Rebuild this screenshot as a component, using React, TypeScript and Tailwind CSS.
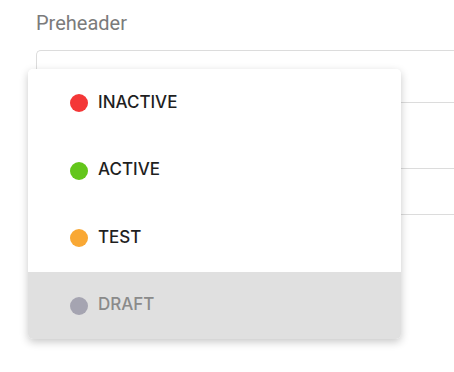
import React from "react";

const items = [
  { label: "INACTIVE", dot: "bg-[#f43737]", text: "text-[#1f1f1f]", row: "bg-white" },
  { label: "ACTIVE", dot: "bg-[#63c61b]", text: "text-[#1f1f1f]", row: "bg-white" },
  { label: "TEST", dot: "bg-[#f9a834]", text: "text-[#1f1f1f]", row: "bg-white" },
  { label: "DRAFT", dot: "bg-[#a5a4b1]", text: "text-[#8a8a8a]", row: "bg-[#e0e0e0]" },
];

export default function App() {
  return (
    <div className="relative w-[454px] h-[372px] bg-white overflow-hidden font-['Roboto',sans-serif]">
      <div className="pl-[36px] pt-[10px]">
        <div className="text-[20px] leading-[26px] text-[#7b7b7b]">Preheader</div>
        <div className="mt-[14px] h-[53px] border border-r-0 border-[#dcdcdc] rounded-tl-[5px]" />
        <div className="mt-[65px] h-[47px] border-y border-[#dcdcdc]" />
      </div>
      <div className="absolute left-[28px] top-[69px] w-[373px] rounded-[5px] bg-white overflow-hidden shadow-[0_3px_8px_rgba(0,0,0,0.22)]">
        {items.map((it, i) => (
          <div
            key={it.label}
            className={`flex items-center pl-[42px] ${i % 2 === 0 ? "h-[68px]" : "h-[67px]"} ${it.row}`}
          >
            <span className={`w-[18px] h-[18px] rounded-full ${it.dot}`} />
            <span className={`ml-[10px] pb-[3px] font-['Inter',sans-serif] text-[17px] leading-[20px] font-medium ${it.text}`}>{it.label}</span>
          </div>
        ))}
      </div>
    </div>
  );
}
